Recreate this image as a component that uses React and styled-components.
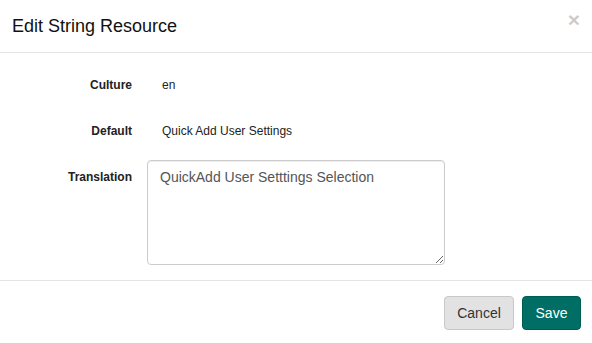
import React from "react";
import styled, { createGlobalStyle } from "styled-components";

const Global = createGlobalStyle`
  html, body { margin: 0; padding: 0; background: #fff; }
  body { font-family: "Liberation Sans", Arial, sans-serif; color: #333; }
  * { box-sizing: border-box; }
`;

const Modal = styled.div`
  width: 592px;
  height: 343px;
  background: #fff;
  display: flex;
  flex-direction: column;
`;

const Header = styled.div`
  position: relative;
  padding: 15px 12px 15px 12px;
  border-bottom: 1px solid #e5e5e5;
  height: 54px;
`;

const Title = styled.h4`
  margin: 0;
  font-size: 18px;
  line-height: 22px;
  font-weight: normal;
  color: #111;
`;

const Close = styled.button`
  position: absolute;
  top: 9px;
  right: 12px;
  border: 0;
  background: transparent;
  padding: 0;
  font-family: "Liberation Sans", Arial, sans-serif;
  font-size: 21px;
  font-weight: bold;
  line-height: 21px;
  color: #000;
  opacity: 0.2;
  cursor: pointer;
`;

const Body = styled.div`
  padding: 15px 0 15px 0;
  display: flex;
  flex-direction: column;
  gap: 12px;
  border-bottom: 1px solid #e5e5e5;
`;

const Row = styled.div`
  display: grid;
  grid-template-columns: 132px 298px;
  column-gap: 15px;
  align-items: start;
`;

const Label = styled.label`
  text-align: right;
  font-size: 12px;
  font-weight: bold;
  line-height: 20px;
  padding-top: 7px;
  color: #222;
`;

const Static = styled.div`
  font-size: 12px;
  line-height: 20px;
  padding: 7px 15px 7px 15px;
  min-height: 34px;
  color: #222;
`;

const TextArea = styled.textarea`
  width: 298px;
  height: 105px;
  border: 1px solid #ccc;
  border-radius: 4px;
  padding: 6px 12px;
  font-family: "Liberation Sans", Arial, sans-serif;
  font-size: 14px;
  line-height: 20px;
  color: #555;
  resize: vertical;
  box-shadow: inset 0 1px 1px rgba(0,0,0,0.075);
  outline: none;
  display: block;
`;

const Footer = styled.div`
  display: flex;
  justify-content: flex-end;
  gap: 8px;
  padding: 15px 11px 15px 11px;
`;

const Button = styled.button`
  height: 34px;
  padding: 6px 12px;
  font-family: "Liberation Sans", Arial, sans-serif;
  font-size: 14px;
  line-height: 20px;
  border-radius: 4px;
  cursor: pointer;
  border: 1px solid ${(p) => (p.$primary ? "#005d54" : "#c8c8c8")};
  background: ${(p) => (p.$primary ? "#006e64" : "#e2e2e2")};
  color: ${(p) => (p.$primary ? "#fff" : "#333")};
  min-width: ${(p) => (p.$primary ? "59px" : "70px")};
`;

export default function App() {
  return (
    <>
      <Global />
      <Modal>
        <Header>
          <Title>Edit String Resource</Title>
          <Close aria-label="Close">×</Close>
        </Header>
        <Body>
          <Row>
            <Label>Culture</Label>
            <Static>en</Static>
          </Row>
          <Row>
            <Label>Default</Label>
            <Static>Quick Add User Settings</Static>
          </Row>
          <Row>
            <Label>Translation</Label>
            <TextArea defaultValue="QuickAdd User Setttings Selection" />
          </Row>
        </Body>
        <Footer>
          <Button>Cancel</Button>
          <Button $primary>Save</Button>
        </Footer>
      </Modal>
    </>
  );
}
